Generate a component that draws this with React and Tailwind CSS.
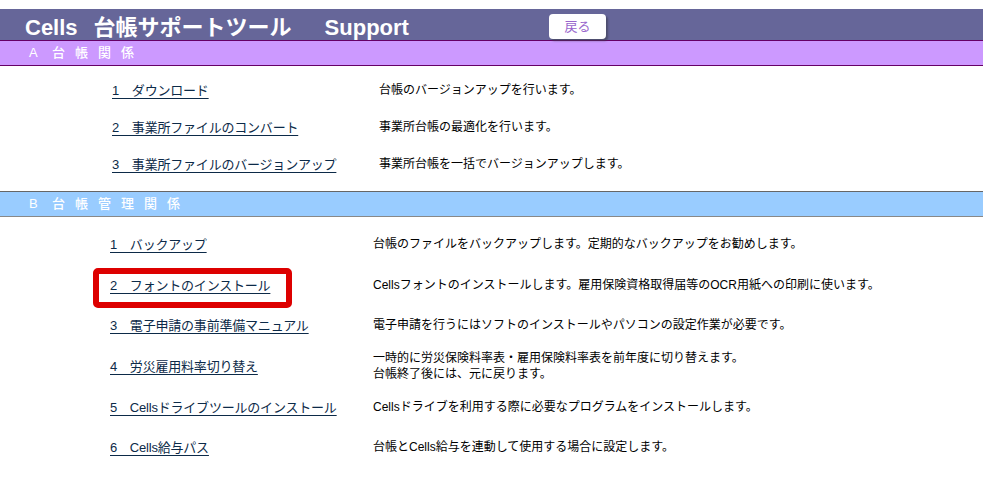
import React from "react";

const sectionA = [
  { label: "1　ダウンロード", desc: ["台帳のバージョンアップを行います。"] },
  { label: "2　事業所ファイルのコンバート", desc: ["事業所台帳の最適化を行います。"] },
  { label: "3　事業所ファイルのバージョンアップ", desc: ["事業所台帳を一括でバージョンアップします。"] },
];

const sectionB = [
  { label: "1　バックアップ", desc: ["台帳のファイルをバックアップします。定期的なバックアップをお勧めします。"] },
  {
    label: "2　フォントのインストール",
    desc: ["Cellsフォントのインストールします。雇用保険資格取得届等のOCR用紙への印刷に使います。"],
    marked: true,
  },
  { label: "3　電子申請の事前準備マニュアル", desc: ["電子申請を行うにはソフトのインストールやパソコンの設定作業が必要です。"] },
  {
    label: "4　労災雇用料率切り替え",
    desc: ["一時的に労災保険料率表・雇用保険料率表を前年度に切り替えます。", "台帳終了後には、元に戻ります。"],
  },
  { label: "5　Cellsドライブツールのインストール", desc: ["Cellsドライブを利用する際に必要なプログラムをインストールします。"] },
  { label: "6　Cells給与パス", desc: ["台帳とCells給与を連動して使用する場合に設定します。"] },
];

function SectionBar({ chars, className }) {
  return (
    <div className={`flex h-[26px] items-center pl-[29px] text-[13px] font-medium text-white ${className}`}>
      {chars.map((c, i) => (
        <span key={i} className="w-[23px]">
          {c}
        </span>
      ))}
    </div>
  );
}

function Row({ item, rowH, linkX }) {
  return (
    <div className={`flex items-center ${rowH}`}>
      <div className={`relative shrink-0 ${linkX}`}>
        {item.marked && (
          <div className="pointer-events-none absolute left-[-17px] top-[-5px] h-[40px] w-[199px] rounded-[5px] border-[6px] border-[#dd0000]" />
        )}
        <a href="#" className="text-[13px] tracking-[-0.2px] text-[#0c2a48] underline underline-offset-[3px]">
          {item.label}
        </a>
      </div>
      <div className="text-[12px] leading-[16px] text-black">
        {item.desc.map((d, i) => (
          <div key={i}>{d}</div>
        ))}
      </div>
    </div>
  );
}

export default function App() {
  return (
    <div
      className="min-h-[496px] w-full bg-white pt-[9px]"
      style={{ fontFamily: '"Liberation Sans", "Noto Sans CJK JP", sans-serif' }}
    >
      {/* Title bar */}
      <div className="flex h-[31px] items-center bg-[#666699] pl-[25px] text-white">
        <span className="pt-[6px] text-[22px] font-bold leading-none">Cells</span>
        <span className="ml-[16px] pt-[6px] text-[22px] font-bold leading-none">台帳サポートツール</span>
        <span className="ml-[33px] pt-[6px] text-[22px] font-bold leading-none">Support</span>
        <button className="ml-[140px] mt-[4px] h-[25px] w-[57px] rounded-[4px] bg-white text-[13px] text-[#9966cc] shadow-[2px_2px_2px_rgba(60,60,80,0.6)]">
          戻る
        </button>
      </div>

      {/* Section A */}
      <SectionBar
        chars={["A", "台", "帳", "関", "係"]}
        className="border-y border-[#660066] bg-[#cc99ff]"
      />
      <div className="pb-[9px] pl-[112px] pt-[5px]">
        {sectionA.map((item, i) => (
          <Row key={i} item={item} rowH="h-[37px]" linkX="w-[267px]" />
        ))}
      </div>

      {/* Section B */}
      <SectionBar
        chars={["B", "台", "帳", "管", "理", "関", "係"]}
        className="border-y border-t-[#666666] border-b-[#888888] bg-[#99ccff]"
      />
      <div className="pl-[110px] pt-[7px]">
        {sectionB.map((item, i) => (
          <Row key={i} item={item} rowH="h-[40.6px]" linkX="w-[263px]" />
        ))}
      </div>
    </div>
  );
}
